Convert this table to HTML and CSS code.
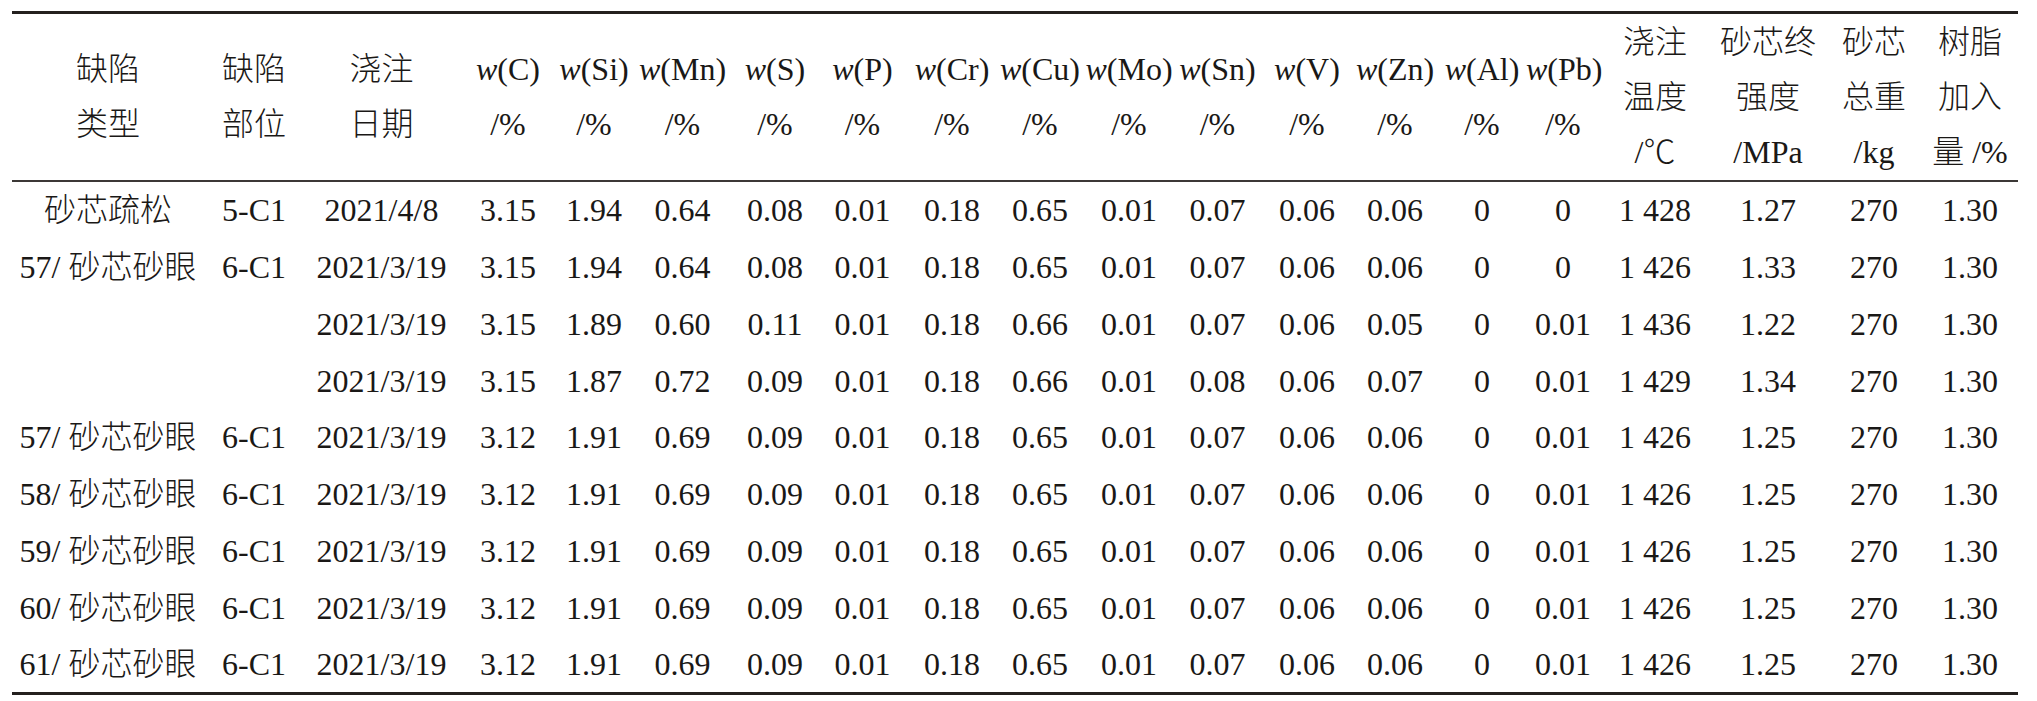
FILE: index.html
```html
<!DOCTYPE html>
<html lang="zh-CN">
<head>
<meta charset="utf-8">
<title>表</title>
<link rel="stylesheet" href="styles.css">
</head>
<body>
<table class="data-table">
  <colgroup>
    <col class="c1"><col class="c2"><col class="c3"><col class="c4"><col class="c5">
    <col class="c6"><col class="c7"><col class="c8"><col class="c9"><col class="c10">
    <col class="c11"><col class="c12"><col class="c13"><col class="c14"><col class="c15">
    <col class="c16"><col class="c17"><col class="c18"><col class="c19"><col class="c20">
  </colgroup>
  <thead>
    <tr>
      <th><div class="hl">缺陷</div><div class="hl">类型</div></th>
      <th><div class="hl">缺陷</div><div class="hl">部位</div></th>
      <th><div class="hl">浇注</div><div class="hl">日期</div></th>
      <th><div class="hl"><i>w</i>(C)</div><div class="hl">/%</div></th>
      <th><div class="hl"><i>w</i>(Si)</div><div class="hl">/%</div></th>
      <th><div class="hl"><i>w</i>(Mn)</div><div class="hl">/%</div></th>
      <th><div class="hl"><i>w</i>(S)</div><div class="hl">/%</div></th>
      <th><div class="hl"><i>w</i>(P)</div><div class="hl">/%</div></th>
      <th><div class="hl"><i>w</i>(Cr)</div><div class="hl">/%</div></th>
      <th><div class="hl"><i>w</i>(Cu)</div><div class="hl">/%</div></th>
      <th><div class="hl"><i>w</i>(Mo)</div><div class="hl">/%</div></th>
      <th><div class="hl"><i>w</i>(Sn)</div><div class="hl">/%</div></th>
      <th><div class="hl"><i>w</i>(V)</div><div class="hl">/%</div></th>
      <th><div class="hl"><i>w</i>(Zn)</div><div class="hl">/%</div></th>
      <th><div class="hl"><i>w</i>(Al)</div><div class="hl">/%</div></th>
      <th><div class="hl"><i>w</i>(Pb)</div><div class="hl">/%</div></th>
      <th><div class="hl">浇注</div><div class="hl">温度</div><div class="hl">/℃</div></th>
      <th><div class="hl">砂芯终</div><div class="hl">强度</div><div class="hl">/MPa</div></th>
      <th><div class="hl">砂芯</div><div class="hl">总重</div><div class="hl">/kg</div></th>
      <th><div class="hl">树脂</div><div class="hl">加入</div><div class="hl">量 /%</div></th>
    </tr>
  </thead>
  <tbody>
    <tr><td>砂芯疏松</td><td>5-C1</td><td>2021/4/8</td><td>3.15</td><td>1.94</td><td>0.64</td><td>0.08</td><td>0.01</td><td>0.18</td><td>0.65</td><td>0.01</td><td>0.07</td><td>0.06</td><td>0.06</td><td>0</td><td>0</td><td>1 428</td><td>1.27</td><td>270</td><td>1.30</td></tr>
    <tr><td>57/ 砂芯砂眼</td><td>6-C1</td><td>2021/3/19</td><td>3.15</td><td>1.94</td><td>0.64</td><td>0.08</td><td>0.01</td><td>0.18</td><td>0.65</td><td>0.01</td><td>0.07</td><td>0.06</td><td>0.06</td><td>0</td><td>0</td><td>1 426</td><td>1.33</td><td>270</td><td>1.30</td></tr>
    <tr><td></td><td></td><td>2021/3/19</td><td>3.15</td><td>1.89</td><td>0.60</td><td>0.11</td><td>0.01</td><td>0.18</td><td>0.66</td><td>0.01</td><td>0.07</td><td>0.06</td><td>0.05</td><td>0</td><td>0.01</td><td>1 436</td><td>1.22</td><td>270</td><td>1.30</td></tr>
    <tr><td></td><td></td><td>2021/3/19</td><td>3.15</td><td>1.87</td><td>0.72</td><td>0.09</td><td>0.01</td><td>0.18</td><td>0.66</td><td>0.01</td><td>0.08</td><td>0.06</td><td>0.07</td><td>0</td><td>0.01</td><td>1 429</td><td>1.34</td><td>270</td><td>1.30</td></tr>
    <tr><td>57/ 砂芯砂眼</td><td>6-C1</td><td>2021/3/19</td><td>3.12</td><td>1.91</td><td>0.69</td><td>0.09</td><td>0.01</td><td>0.18</td><td>0.65</td><td>0.01</td><td>0.07</td><td>0.06</td><td>0.06</td><td>0</td><td>0.01</td><td>1 426</td><td>1.25</td><td>270</td><td>1.30</td></tr>
    <tr><td>58/ 砂芯砂眼</td><td>6-C1</td><td>2021/3/19</td><td>3.12</td><td>1.91</td><td>0.69</td><td>0.09</td><td>0.01</td><td>0.18</td><td>0.65</td><td>0.01</td><td>0.07</td><td>0.06</td><td>0.06</td><td>0</td><td>0.01</td><td>1 426</td><td>1.25</td><td>270</td><td>1.30</td></tr>
    <tr><td>59/ 砂芯砂眼</td><td>6-C1</td><td>2021/3/19</td><td>3.12</td><td>1.91</td><td>0.69</td><td>0.09</td><td>0.01</td><td>0.18</td><td>0.65</td><td>0.01</td><td>0.07</td><td>0.06</td><td>0.06</td><td>0</td><td>0.01</td><td>1 426</td><td>1.25</td><td>270</td><td>1.30</td></tr>
    <tr><td>60/ 砂芯砂眼</td><td>6-C1</td><td>2021/3/19</td><td>3.12</td><td>1.91</td><td>0.69</td><td>0.09</td><td>0.01</td><td>0.18</td><td>0.65</td><td>0.01</td><td>0.07</td><td>0.06</td><td>0.06</td><td>0</td><td>0.01</td><td>1 426</td><td>1.25</td><td>270</td><td>1.30</td></tr>
    <tr><td>61/ 砂芯砂眼</td><td>6-C1</td><td>2021/3/19</td><td>3.12</td><td>1.91</td><td>0.69</td><td>0.09</td><td>0.01</td><td>0.18</td><td>0.65</td><td>0.01</td><td>0.07</td><td>0.06</td><td>0.06</td><td>0</td><td>0.01</td><td>1 426</td><td>1.25</td><td>270</td><td>1.30</td></tr>
  </tbody>
</table>
</body>
</html>
```

FILE: styles.css
```css
html, body {
  margin: 0;
  padding: 0;
  background: #ffffff;
}

body {
  padding: 11px 0 0 12px;
  color: #1a1816;
  font-family: "Liberation Serif", "Noto Sans CJK SC", serif;
  font-size: 32px;
  font-weight: 300;
}

.data-table {
  border-collapse: separate;
  border-spacing: 0;
  table-layout: fixed;
  width: 2006px;
}

.c1 { width: 192px; }
.c2 { width: 100px; }
.c3 { width: 155px; }
.c4 { width: 98px; }
.c5 { width: 74px; }
.c6 { width: 103px; }
.c7 { width: 82px; }
.c8 { width: 93px; }
.c9 { width: 86px; }
.c10 { width: 90px; }
.c11 { width: 88px; }
.c12 { width: 89px; }
.c13 { width: 90px; }
.c14 { width: 86px; }
.c15 { width: 88px; }
.c16 { width: 74px; }
.c17 { width: 110px; }
.c18 { width: 116px; }
.c19 { width: 96px; }
.c20 { width: 96px; }

.data-table th,
.data-table td {
  box-sizing: border-box;
  padding: 0;
  text-align: center;
  white-space: nowrap;
  font-weight: 300;
  vertical-align: middle;
}

.data-table th {
  height: 171px;
  border-top: 3px solid #24201e;
  border-bottom: 2px solid #3c3836;
}

.hl {
  height: 55px;
  line-height: 55px;
}

.data-table th i {
  font-style: italic;
}

.data-table td {
  height: 56.75px;
  line-height: 56px;
}

.data-table tbody tr:last-child td {
  border-bottom: 3px solid #24201e;
}
```
